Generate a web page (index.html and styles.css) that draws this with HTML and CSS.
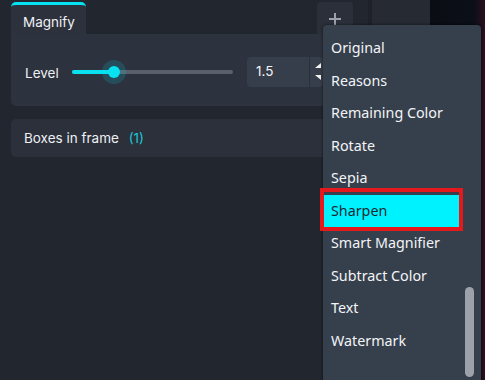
FILE: index.html
```html
<!DOCTYPE html>
<html>
<head>
<meta charset="utf-8">
<link rel="stylesheet" href="styles.css">
</head>
<body>
<div class="app">
  <div class="sidebar">
    <div class="tabrow">
      <div class="tab">Magnify</div>
      <div class="tab-spacer"></div>
      <div class="addbtn">
        <svg width="14" height="14" viewBox="0 0 14 14"><path d="M7 1V13M1 7H13" stroke="#9ba1aa" stroke-width="2"/></svg>
      </div>
    </div>
    <div class="panel">
      <div class="field">
        <span class="label">Level</span>
        <div class="slider">
          <div class="track"><div class="fill" style="width:42px"></div></div>
          <div class="thumb" style="left:42px"></div>
        </div>
        <div class="num">
          <span class="numval">1.5</span>
          <div class="spin">
            <svg width="8" height="22" viewBox="0 0 8 22"><path d="M7 2L1 7H7Z" fill="#f2f2f2"/><path d="M1 14H7V19Z" fill="#f2f2f2"/></svg>
          </div>
        </div>
      </div>
    </div>
    <div class="card">Boxes in frame <span class="count">(1)</span></div>
  </div>
  <div class="divider"></div>
  <div class="column"></div>
  <div class="video"></div>

  <div class="menu">
    <div class="item">Original</div>
    <div class="item">Reasons</div>
    <div class="item">Remaining Color</div>
    <div class="item">Rotate</div>
    <div class="item">Sepia</div>
    <div class="item active">Sharpen</div>
    <div class="item">Smart Magnifier</div>
    <div class="item">Subtract Color</div>
    <div class="item">Text</div>
    <div class="item">Watermark</div>
    <div class="scrollthumb"></div>
  </div>
</div>
</body>
</html>
```

FILE: styles.css
```css
html, body {
  margin: 0;
  padding: 0;
  width: 485px;
  height: 380px;
  overflow: hidden;
  background: #22262e;
}

.app {
  position: relative;
  display: flex;
  width: 485px;
  height: 380px;
  font-family: Inter, "Liberation Sans", sans-serif;
  color: #e6e8ec;
}

.sidebar {
  width: 368px;
  flex: none;
  padding: 2px 0 0 11px;
  box-sizing: border-box;
  display: flex;
  flex-direction: column;
}

.tabrow {
  display: flex;
  height: 32px;
}

.tab {
  width: 75px;
  box-sizing: border-box;
  border-top: 3px solid #05e3f2;
  border-radius: 5px 5px 0 0;
  background: #2c313c;
  font-size: 13.5px;
  padding: 9px 0 0 12px;
  color: #eef0f3;
}

.tab-spacer {
  width: 231px;
}

.addbtn {
  width: 36px;
  height: 32px;
  background: #2a2f39;
  border-radius: 4px 4px 0 0;
  display: flex;
  justify-content: center;
  padding-top: 10px;
  box-sizing: border-box;
}

.panel {
  height: 72px;
  background: #2c323e;
  border-radius: 0 0 5px 5px;
  display: flex;
  align-items: center;
  padding: 3px 0 0 14px;
  box-sizing: border-box;
}

.field {
  display: flex;
  align-items: center;
  height: 30px;
}

.label {
  font-size: 13.5px;
  width: 47px;
  color: #eef0f3;
  padding-top: 3px;
}

.slider {
  position: relative;
  width: 161px;
  height: 14px;
  display: flex;
  align-items: center;
}

.track {
  width: 161px;
  height: 4px;
  border-radius: 2px;
  background: #5a606b;
  overflow: hidden;
}

.fill {
  height: 4px;
  background: #08e2f0;
}

.thumb {
  position: absolute;
  top: 1px;
  width: 12px;
  height: 12px;
  margin-left: -6px;
  border-radius: 50%;
  background: #08e2f0;
  box-shadow: 0 0 0 6px rgba(8, 226, 240, 0.16);
}

.num {
  margin-left: 14px;
  width: 76px;
  height: 30px;
  display: flex;
  background: #373e4b;
  border-radius: 4px;
}

.numval {
  width: 63px;
  box-sizing: border-box;
  padding: 6px 0 0 9px;
  font-size: 13.5px;
  color: #f2f3f5;
  border-right: 1px solid #2a2f38;
}

.spin {
  padding: 4px 0 0 4px;
}

.card {
  margin-top: 13px;
  height: 38px;
  background: #2b303b;
  border-radius: 5px;
  font-size: 13.5px;
  padding: 11px 0 0 13px;
  box-sizing: border-box;
  color: #eef0f3;
}

.count {
  color: #1fc6d6;
  margin-left: 6px;
}

.divider {
  width: 4px;
  background: #1e2128;
}

.column {
  width: 58px;
  background: #252a33;
}

.video {
  flex: 1;
  background: linear-gradient(90deg, #0a0d14 0%, #0b0f18 80%, #2a0f1c 100%);
}

.menu {
  position: absolute;
  left: 323px;
  top: 25px;
  width: 158px;
  height: 370px;
  background: #36404d;
  border-radius: 4px;
  box-shadow: 0 0 3px rgba(0, 0, 0, 0.6);
  padding-top: 7px;
  box-sizing: border-box;
  font-family: "Noto Sans", "Open Sans", sans-serif;
  font-size: 14.3px;
}

.item {
  height: 32.5px;
  line-height: 32px;
  padding-left: 8px;
  color: #f3f4f6;
  width: 136px;
  box-sizing: border-box;
  white-space: nowrap;
}

.item.active {
  position: relative;
  background: #00f2ff;
  color: #1b2730;
}

.item.active::after {
  content: "";
  position: absolute;
  left: -3px;
  top: -7px;
  right: -4px;
  bottom: -4px;
  border: 4px solid #e5191c;
}

.scrollthumb {
  position: absolute;
  left: 142px;
  top: 262px;
  width: 9px;
  height: 90px;
  border-radius: 5px;
  background: #9da1a9;
}
```
